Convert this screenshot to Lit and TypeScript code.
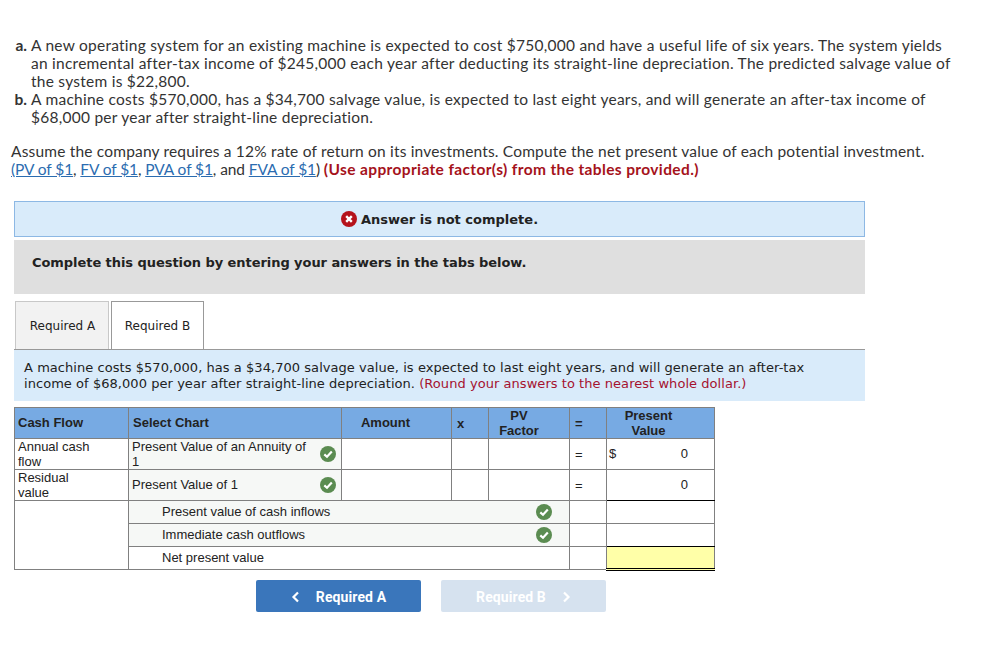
import { LitElement, html, css } from "lit";
import { customElement } from "lit/decorators.js";

const check = html`<svg class="chk" viewBox="0 0 16 16" width="16" height="16"><circle cx="8" cy="8" r="8" fill="#5b8c51"/><path d="M4.3 8.4 L7 10.8 L11.8 5.6" fill="none" stroke="#fff" stroke-width="2.2"/></svg>`;
const cross = html`<svg class="x" viewBox="0 0 16 16" width="16" height="16"><circle cx="8" cy="8" r="8" fill="#b5121b"/><path d="M5.2 5.2 L10.8 10.8 M10.8 5.2 L5.2 10.8" fill="none" stroke="#fff" stroke-width="2.4"/></svg>`;

@customElement("app-root")
export class AppRoot extends LitElement {
  static styles = css`
    :host { display: block; width: 996px; height: 650px; background: #fff; overflow: hidden; box-sizing: border-box; padding-top: 36px; color: #333; }
    .q { font-family: Lato, "Liberation Sans", sans-serif; font-size: 15.5px; line-height: 18px; letter-spacing: 0.25px; }
    .item { display: grid; grid-template-columns: 31px 925px; }
    .item b { text-align: right; padding-right: 4px; letter-spacing: 0; }
    .assume { margin: 16px 0 0 11px; width: 960px; letter-spacing: 0.18px; }
    .line2 { letter-spacing: -0.1px; }
    .q a { color: #2b6cb0; text-decoration: underline; }
    .q .red { color: #a5121b; font-weight: 700; letter-spacing: 0.37px; }
    .work { margin: 23px 0 0 14px; width: 851px; font-family: "DejaVu Sans", Verdana, sans-serif; color: #222; }
    .banner { box-sizing: border-box; height: 36px; background: #d9ebfa; border: 1px solid #8db8e4; display: flex; align-items: center; justify-content: center; gap: 4px; font-size: 13px; font-weight: 700; }
    .x { display: block; }
    .grey { box-sizing: border-box; height: 54px; margin-top: 3px; background: #dfdfdf; padding: 15px 18px; font-size: 13px; line-height: 16px; font-weight: 700; letter-spacing: -0.06px; }
    .tabs { display: flex; gap: 2px; margin: 7px 0 0 1px; height: 48px; }
    .tab { box-sizing: border-box; width: 94px; height: 48px; display: flex; align-items: center; justify-content: center; padding-left: 1px; font-size: 12px; border: 1px solid #c8c8c8; border-bottom: 0; background: #f2f2f2; }
    .tab.on { width: 93px; height: 48px; padding-left: 0; background: #fff; border-color: #999; }
    .desc { box-sizing: border-box; height: 52px; background: #d9ebfa; border-top: 1px solid #999; padding: 10px 50px 0 10px; font-size: 13px; line-height: 16px; letter-spacing: 0.05px; }
    .desc span { color: #a5122f; }
    table { border-collapse: collapse; table-layout: fixed; width: 700px; margin-top: 6px; font-family: "Liberation Sans", Arial, sans-serif; font-size: 13px; line-height: 15px; color: #222; }
    td, th { border: 1px solid #808080; padding: 0; box-sizing: border-box; height: 31px; }
    th { background: #77aae3; font-weight: 700; text-align: center; }
    th.l { text-align: left; padding: 0 0 2px 4px; }
    th.first { padding-left: 3px; }
    th.amt { padding: 0 22px 2px 0; }
    th.fac { padding-right: 20px; }
    th.pvh { padding-right: 24px; }
    th.op, td.op { text-align: left; padding-left: 5px; }
    td.l { padding-left: 3px; }
    td.sel { background: #f6f8f6; padding-left: 3px; }
    .cell { display: flex; align-items: center; justify-content: space-between; padding-right: 5px; }
    .cell span { display: block; }
    .cell span.one { padding-bottom: 2px; }
    .sum td { height: 23px; }
    .sum td.lab { background: #f6f8f6; padding: 0 12px 0 33px; }
    .sum td.plain { background: #fff; padding-bottom: 2px; }
    .val { display: flex; justify-content: space-between; padding: 0 26px 2px 2px; }
    td.pv { text-align: right; padding: 0 26px 2px 0; }
    td.tb { border-bottom: 1px solid #000; }
    td.yel { background: #ffffa8; border-top: 1px solid #000; border-bottom: 3px double #000; }
    .chk { display: block; }
    .nav { display: flex; gap: 20px; margin: 9px 0 0 242px; }
    .btn { box-sizing: border-box; width: 165px; height: 32px; padding-top: 1px; border-radius: 2px; display: flex; align-items: center; justify-content: center; gap: 16px; font-family: Roboto, sans-serif; font-size: 14px; font-weight: 700; letter-spacing: 0.1px; color: #fff; background: #3a76bb; }
    .btn.off { background: #d6e2ef; }
    .btn svg { display: block; }
  `;

  render() {
    return html`
      <div class="q">
        <div class="item"><b>a.</b><div>A new operating system for an existing machine is expected to cost $750,000 and have a useful life of six years. The system yields an incremental after-tax income of $245,000 each year after deducting its straight-line depreciation. The predicted salvage value of the system is $22,800.</div></div>
        <div class="item"><b>b.</b><div>A machine costs $570,000, has a $34,700 salvage value, is expected to last eight years, and will generate an after-tax income of $68,000 per year after straight-line depreciation.</div></div>
        <div class="assume">Assume the company requires a 12% rate of return on its investments. Compute the net present value of each potential investment.<br><span class="line2"><a>(PV of $1</a>, <a>FV of $1</a>, <a>PVA of $1</a>, and <a>FVA of $1</a>) <span class="red">(Use appropriate factor(s) from the tables provided.)</span></span></div>
      </div>
      <div class="work">
        <div class="banner">${cross}<span>Answer is not complete.</span></div>
        <div class="grey">Complete this question by entering your answers in the tabs below.</div>
        <div class="tabs"><div class="tab">Required A</div><div class="tab on">Required B</div></div>
        <div class="desc">A machine costs $570,000, has a $34,700 salvage value, is expected to last eight years, and will generate an after-tax income of $68,000 per year after straight-line depreciation. <span>(Round your answers to the nearest whole dollar.)</span></div>
        <table>
          <colgroup><col style="width:114px"><col style="width:213px"><col style="width:110px"><col style="width:37px"><col style="width:81px"><col style="width:37px"><col style="width:108px"></colgroup>
          <tr><th class="l first">Cash Flow</th><th class="l">Select Chart</th><th class="amt">Amount</th><th class="op">x</th><th class="fac">PV<br>Factor</th><th class="op">=</th><th class="pvh">Present<br>Value</th></tr>
          <tr><td class="l">Annual cash<br>flow</td><td class="sel"><div class="cell"><span>Present Value of an Annuity of<br>1</span>${check}</div></td><td></td><td></td><td></td><td class="op">=</td><td><div class="val"><span>$</span><span>0</span></div></td></tr>
          <tr><td class="l">Residual<br>value</td><td class="sel"><div class="cell"><span class="one">Present Value of 1</span>${check}</div></td><td></td><td></td><td></td><td class="op">=</td><td class="pv tb">0</td></tr>
          <tr class="sum"><td rowspan="3"></td><td colspan="4" class="lab"><div class="cell"><span class="one">Present value of cash inflows</span>${check}</div></td><td></td><td></td></tr>
          <tr class="sum"><td colspan="4" class="lab"><div class="cell"><span class="one">Immediate cash outflows</span>${check}</div></td><td></td><td class="tb"></td></tr>
          <tr class="sum"><td colspan="4" class="lab plain">Net present value</td><td></td><td class="yel"></td></tr>
        </table>
        <div class="nav">
          <div class="btn"><svg width="9" height="12" viewBox="0 0 9 12"><path d="M7 1.5 L2.5 6 L7 10.5" fill="none" stroke="#fff" stroke-width="2.2"/></svg><span>Required A</span></div>
          <div class="btn off"><span>Required B</span><svg width="9" height="12" viewBox="0 0 9 12"><path d="M2 1.5 L6.5 6 L2 10.5" fill="none" stroke="#fff" stroke-width="2.2"/></svg></div>
        </div>
      </div>
    `;
  }
}
